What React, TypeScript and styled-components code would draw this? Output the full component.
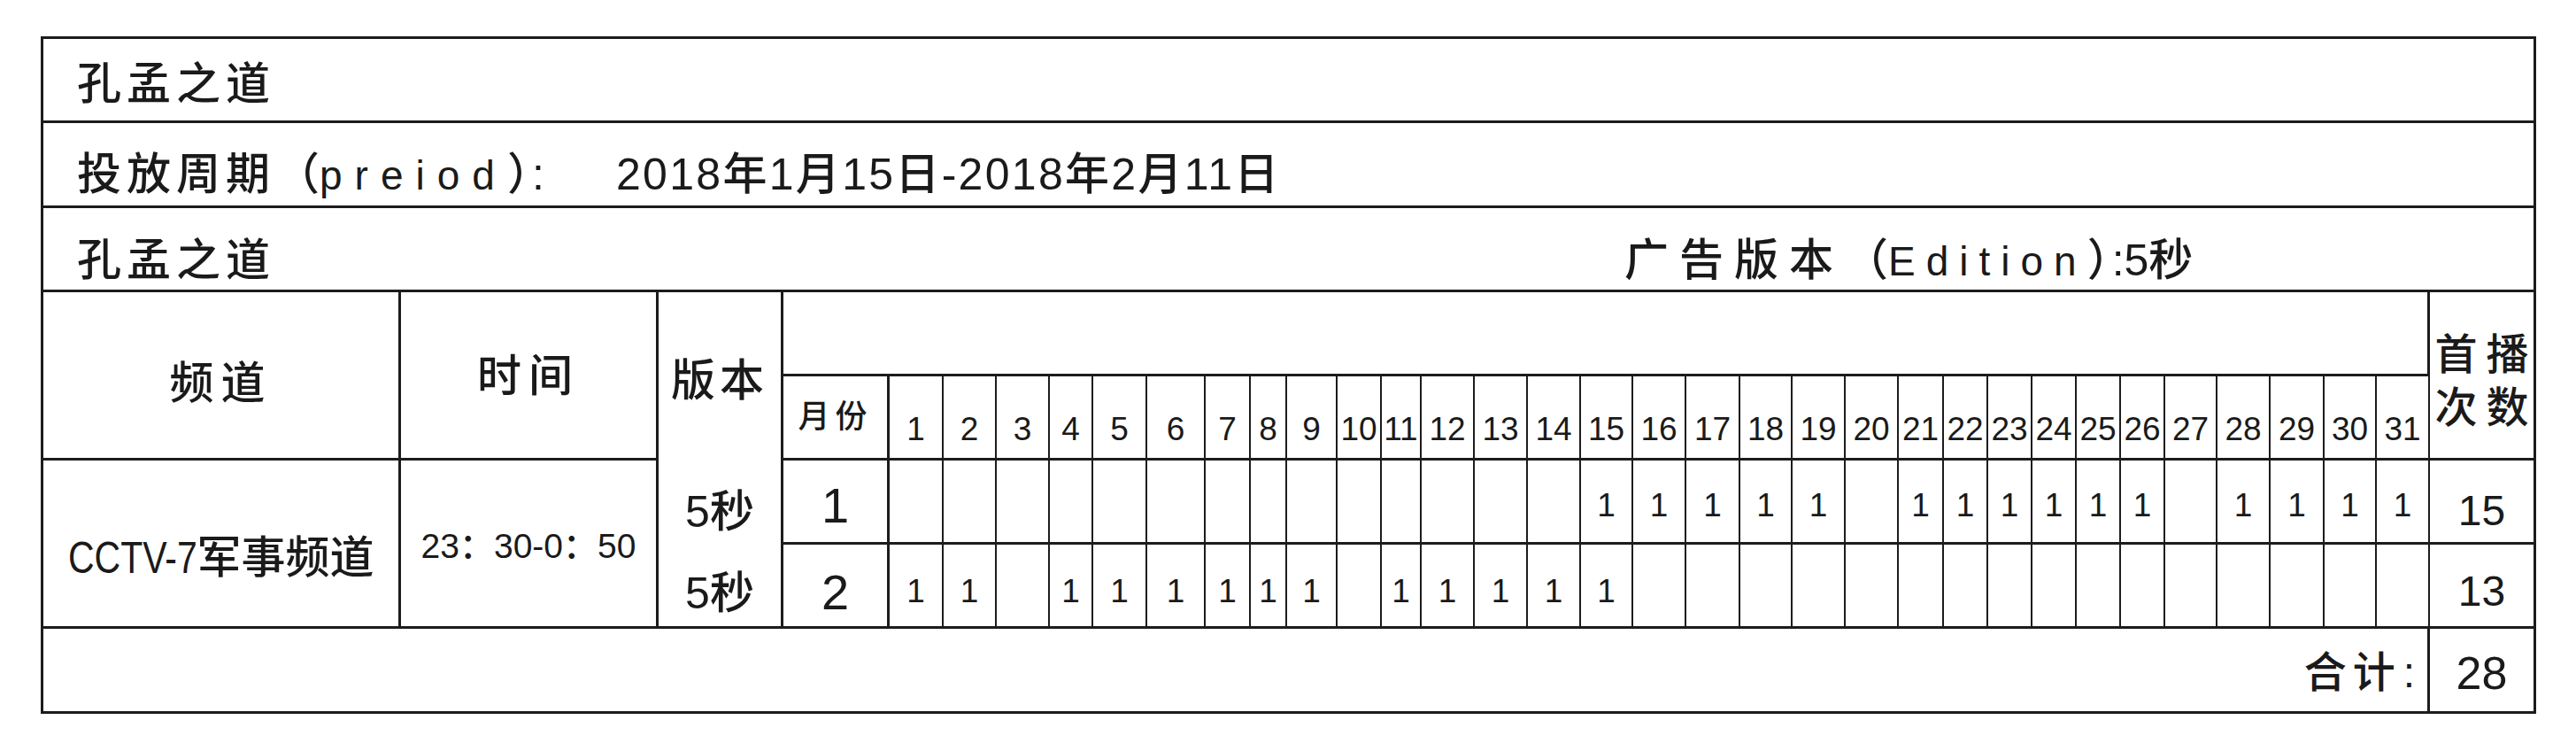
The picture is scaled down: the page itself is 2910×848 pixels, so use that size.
import React from 'react'
import styled, { createGlobalStyle } from 'styled-components'

const LINE = '#1c1c1c'

const GlobalStyle = createGlobalStyle`
  html, body {
    margin: 0;
    padding: 0;
    background: #ffffff;
  }
  body {
    font-family: 'Liberation Sans', 'Noto Sans CJK SC', sans-serif;
    font-weight: 500;
    color: #1a1a1a;
  }
`

const dayWidths = [
  61, 60, 60, 49, 61, 66, 51, 41, 57, 50, 45, 60, 60, 60, 59, 60, 61, 59, 60,
  60, 51, 50, 50, 50, 50, 50, 59, 60, 61, 59, 60,
]

const firstRun = [15, 16, 17, 18, 19, 21, 22, 23, 24, 25, 26, 28, 29, 30, 31]
const secondRun = [1, 2, 4, 5, 6, 7, 8, 9, 11, 12, 13, 14, 15]

const Page = styled.div`
  padding: 41px 0 0 46px;
`

const Sheet = styled.div`
  display: grid;
  grid-template-columns: 404px 291px 141px 120px ${dayWidths
      .map(w => `${w}px`)
      .join(' ')} 120px;
  grid-template-rows: 95px 96px 95px 95px 95px 95px 95px 96px;
  width: max-content;
  border-top: 3px solid ${LINE};
  border-left: 3px solid ${LINE};
  line-height: 1;
`

const Cell = styled.div<{
  $col: string
  $row: string
  $open?: boolean
  $thin?: boolean
  $pt?: number
  $size?: number
}>`
  grid-column: ${p => p.$col};
  grid-row: ${p => p.$row};
  box-sizing: border-box;
  display: flex;
  align-items: center;
  justify-content: center;
  border-right: ${p => (p.$thin ? 2 : 3)}px solid ${LINE};
  border-bottom: ${p => (p.$open ? 'none' : `3px solid ${LINE}`)};
  padding-top: ${p => p.$pt ?? 0}px;
  font-size: ${p => p.$size ?? 50}px;
  white-space: nowrap;
`

const TitleCell = styled(Cell)`
  justify-content: flex-start;
  padding-left: 38px;
`

const TotalCell = styled(Cell)`
  justify-content: flex-end;
  padding-right: 14px;
`

const Spaced = styled.span<{ $ls: number }>`
  letter-spacing: ${p => p.$ls}px;
`

const Lead = styled.span<{ $w: number }>`
  display: inline-flex;
  align-items: baseline;
  width: ${p => p.$w}px;
`

const Latin = styled.span<{ $ls: number }>`
  font-size: 46px;
  letter-spacing: ${p => p.$ls}px;
`

const Close = styled.span`
  letter-spacing: -22px;
`

const Narrow = styled.span`
  display: inline-block;
  font-size: 50px;
  transform: scaleX(0.82);
  transform-origin: left center;
  margin-right: -32px;
`

const Stack = styled.div`
  font-size: 48px;
  letter-spacing: 10px;
  line-height: 60px;
  text-align: center;
  padding-left: 10px;
`

const Colon = styled.span`
  margin-left: 2px;
`

export default function App() {
  return (
    <Page>
      <GlobalStyle />
      <Sheet>
        <TitleCell $col="1 / -1" $row="1" $pt={10}>
          <Spaced $ls={6}>孔孟之道</Spaced>
        </TitleCell>

        <TitleCell $col="1 / -1" $row="2" $pt={22}>
          <Lead $w={609}>
            <Spaced $ls={6}>投放周期</Spaced>（<Latin $ls={14}>preiod</Latin>
            <Close>）</Close>:
          </Lead>
          <Spaced $ls={2.3}>2018年1月15日-2018年2月11日</Spaced>
        </TitleCell>

        <TitleCell $col="1 / -1" $row="3" $pt={26}>
          <Lead $w={1748}>
            <Spaced $ls={6}>孔孟之道</Spaced>
          </Lead>
          <span>
            <Spaced $ls={12}>广告版本</Spaced>（<Latin $ls={12}>Edition</Latin>
            <Close>）</Close>:5秒
          </span>
        </TitleCell>

        <Cell $col="1" $row="4 / 6" $pt={18}>
          <Spaced $ls={8}>频道</Spaced>
        </Cell>
        <Cell $col="2" $row="4 / 6" $pt={2}>
          <Spaced $ls={8}>时间</Spaced>
        </Cell>
        <Cell $col="3" $row="4 / 6" $pt={10} $open>
          <Spaced $ls={5}>版本</Spaced>
        </Cell>
        <Cell $col="4 / 36" $row="4" />
        <Cell $col="36" $row="4 / 6" $pt={14}>
          <Stack>
            首播
            <br />
            次数
          </Stack>
        </Cell>

        <Cell $col="4" $row="5" $size={36}>
          <Spaced $ls={6}>月份</Spaced>
        </Cell>
        {dayWidths.map((_, i) => (
          <Cell
            key={`h${i}`}
            $col={`${i + 5}`}
            $row="5"
            $size={37}
            $pt={26}
            $thin
          >
            {i + 1}
          </Cell>
        ))}

        <Cell $col="1" $row="6 / 8" $pt={32}>
          <Narrow>CCTV-7</Narrow>军事频道
        </Cell>
        <Cell $col="2" $row="6 / 8" $pt={6} $size={39}>
          23：30-0：50
        </Cell>

        <Cell $col="3" $row="6" $pt={20} $open>
          5秒
        </Cell>
        <Cell $col="4" $row="6" $pt={10} $size={56}>
          1
        </Cell>
        {dayWidths.map((_, i) => (
          <Cell
            key={`a${i}`}
            $col={`${i + 5}`}
            $row="6"
            $size={37}
            $pt={8}
            $thin
          >
            {firstRun.includes(i + 1) ? '1' : ''}
          </Cell>
        ))}
        <Cell $col="36" $row="6" $pt={22} $size={48}>
          15
        </Cell>

        <Cell $col="3" $row="7" $pt={18}>
          5秒
        </Cell>
        <Cell $col="4" $row="7" $pt={16} $size={56}>
          2
        </Cell>
        {dayWidths.map((_, i) => (
          <Cell
            key={`b${i}`}
            $col={`${i + 5}`}
            $row="7"
            $size={37}
            $pt={12}
            $thin
          >
            {secondRun.includes(i + 1) ? '1' : ''}
          </Cell>
        ))}
        <Cell $col="36" $row="7" $pt={14} $size={48}>
          13
        </Cell>

        <TotalCell $col="1 / 36" $row="8" $pt={6} $size={48}>
          <Spaced $ls={7}>合计</Spaced>
          <Colon>:</Colon>
        </TotalCell>
        <Cell $col="36" $row="8" $pt={6} $size={52}>
          28
        </Cell>
      </Sheet>
    </Page>
  )
}
